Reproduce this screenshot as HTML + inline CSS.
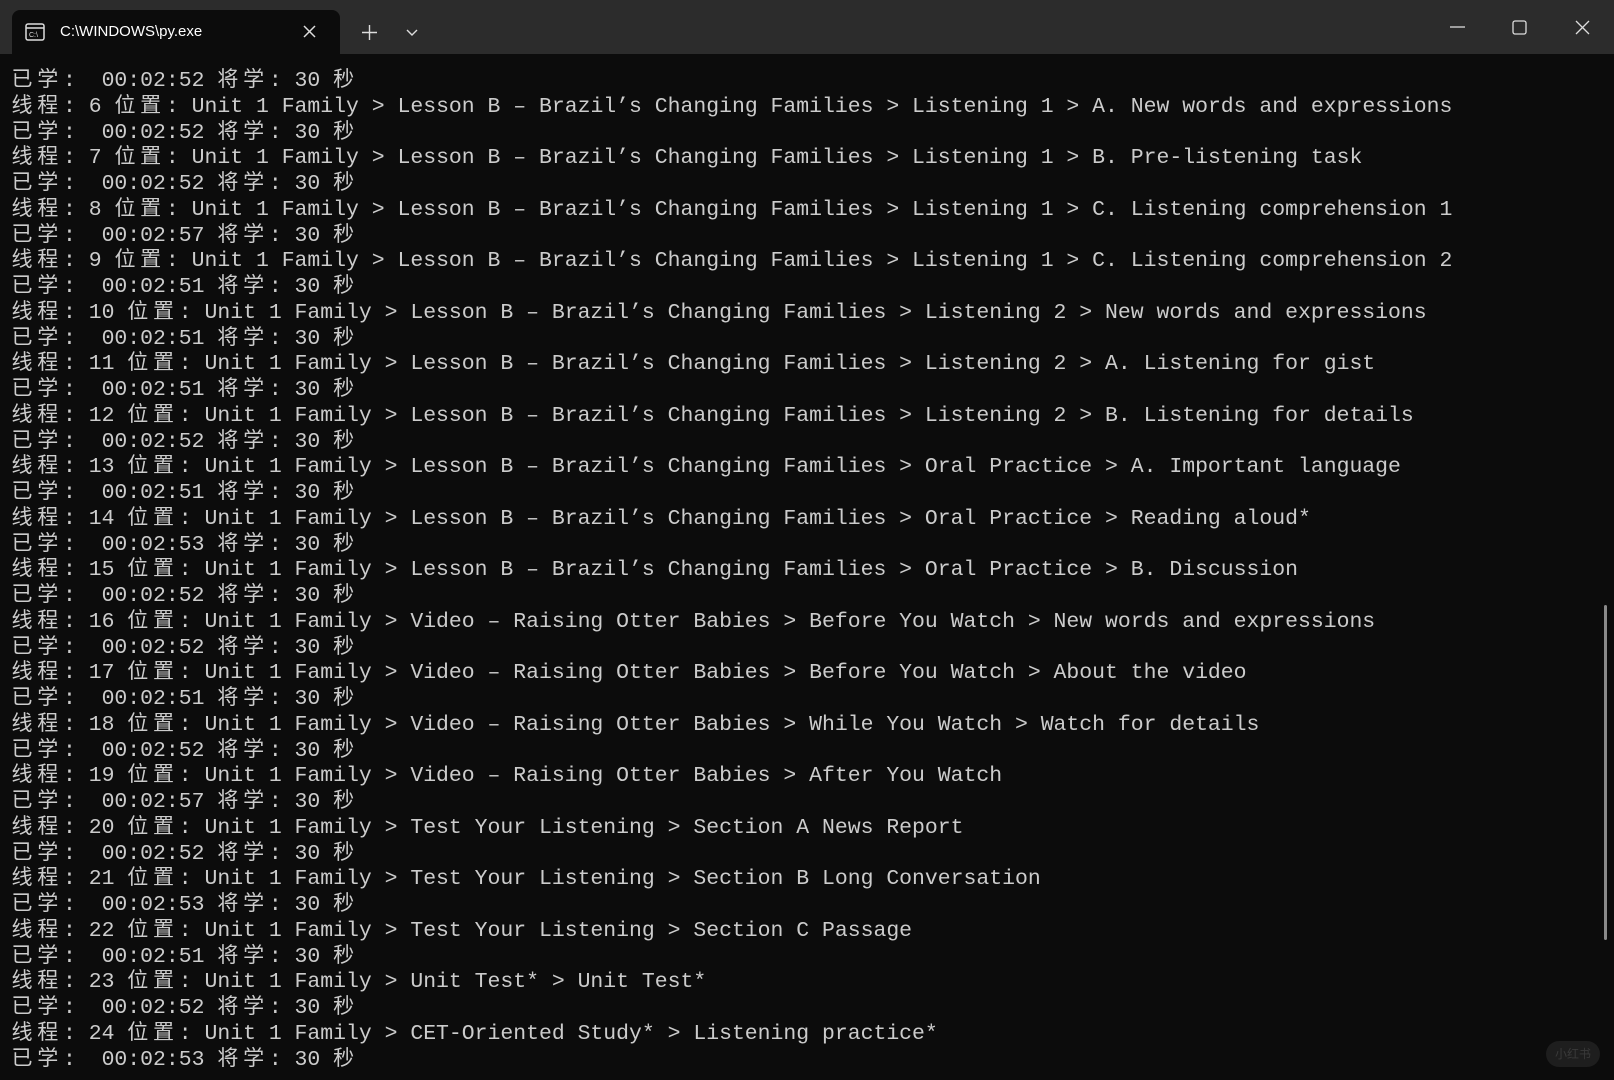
<!DOCTYPE html>
<html><head><meta charset="utf-8"><style>
html,body{margin:0;padding:0;width:1614px;height:1080px;overflow:hidden;background:#0c0c0c;}
.tb{position:absolute;left:0;top:0;width:1614px;height:54px;background:#2c2c2c;}
.tab{position:absolute;left:12px;top:10px;width:328px;height:44px;background:#0c0c0c;border-radius:8px 8px 0 0;}
.tt{position:absolute;left:60px;top:23px;font:15px "Liberation Sans",sans-serif;color:#fff;}
.ic{position:absolute;}
.term{position:absolute;left:11.5px;top:68px;font-family:"Liberation Mono",monospace;font-size:21.45px;color:#cccccc;white-space:normal;}
.term div{height:25.76px;line-height:25.76px;white-space:pre;}
.c{display:inline-block;width:25.74px;font-family:"Noto Sans CJK SC",sans-serif;font-size:21px;line-height:20px;vertical-align:baseline;}
.sb{position:absolute;left:1604px;top:605px;width:3px;height:335px;background:#8a8a8a;border-radius:2px;}
.wm{position:absolute;left:1546px;top:1041px;width:54px;height:26px;border-radius:13px;background:#1e1e1e;color:#3a3a3a;font:12px "Noto Sans CJK SC",sans-serif;text-align:center;line-height:26px;}
</style></head><body>
<div class="tb"></div>
<div class="tab"></div>
<svg class="ic" style="left:25px;top:23px" width="20" height="18" viewBox="0 0 20 18"><rect x="1" y="1" width="18" height="16" rx="2" fill="none" stroke="#ddd" stroke-width="1.5"/><line x1="1" y1="5" x2="19" y2="5" stroke="#ddd" stroke-width="1.5"/><text x="4" y="14" font-size="7" fill="#ddd" font-family="Liberation Sans">C:\</text></svg>
<div class="tt">C:\WINDOWS\py.exe</div>
<svg class="ic" style="left:303px;top:25px" width="13" height="13"><path d="M1 1L12 12M12 1L1 12" stroke="#ddd" stroke-width="1.5"/></svg>
<svg class="ic" style="left:362px;top:25px" width="15" height="15"><path d="M7.5 0V15M0 7.5H15" stroke="#ddd" stroke-width="1.4"/></svg>
<svg class="ic" style="left:406px;top:29px" width="12" height="8"><path d="M1 1L6 6L11 1" stroke="#ddd" stroke-width="1.4" fill="none"/></svg>
<svg class="ic" style="left:1450px;top:26px" width="15" height="2"><path d="M0 1H15" stroke="#ddd" stroke-width="1.3"/></svg>
<svg class="ic" style="left:1512px;top:20px" width="15" height="15"><rect x="1" y="1" width="13" height="13" rx="2" fill="none" stroke="#ddd" stroke-width="1.3"/></svg>
<svg class="ic" style="left:1575px;top:20px" width="15" height="15"><path d="M1 1L14 14M14 1L1 14" stroke="#ddd" stroke-width="1.3"/></svg>
<div class="term"><div><span class="c">已</span><span class="c">学</span>:  00:02:52 <span class="c">将</span><span class="c">学</span>: 30 <span class="c">秒</span></div>
<div><span class="c">线</span><span class="c">程</span>: 6 <span class="c">位</span><span class="c">置</span>: Unit 1 Family &gt; Lesson B – Brazil’s Changing Families &gt; Listening 1 &gt; A. New words and expressions</div>
<div><span class="c">已</span><span class="c">学</span>:  00:02:52 <span class="c">将</span><span class="c">学</span>: 30 <span class="c">秒</span></div>
<div><span class="c">线</span><span class="c">程</span>: 7 <span class="c">位</span><span class="c">置</span>: Unit 1 Family &gt; Lesson B – Brazil’s Changing Families &gt; Listening 1 &gt; B. Pre-listening task</div>
<div><span class="c">已</span><span class="c">学</span>:  00:02:52 <span class="c">将</span><span class="c">学</span>: 30 <span class="c">秒</span></div>
<div><span class="c">线</span><span class="c">程</span>: 8 <span class="c">位</span><span class="c">置</span>: Unit 1 Family &gt; Lesson B – Brazil’s Changing Families &gt; Listening 1 &gt; C. Listening comprehension 1</div>
<div><span class="c">已</span><span class="c">学</span>:  00:02:57 <span class="c">将</span><span class="c">学</span>: 30 <span class="c">秒</span></div>
<div><span class="c">线</span><span class="c">程</span>: 9 <span class="c">位</span><span class="c">置</span>: Unit 1 Family &gt; Lesson B – Brazil’s Changing Families &gt; Listening 1 &gt; C. Listening comprehension 2</div>
<div><span class="c">已</span><span class="c">学</span>:  00:02:51 <span class="c">将</span><span class="c">学</span>: 30 <span class="c">秒</span></div>
<div><span class="c">线</span><span class="c">程</span>: 10 <span class="c">位</span><span class="c">置</span>: Unit 1 Family &gt; Lesson B – Brazil’s Changing Families &gt; Listening 2 &gt; New words and expressions</div>
<div><span class="c">已</span><span class="c">学</span>:  00:02:51 <span class="c">将</span><span class="c">学</span>: 30 <span class="c">秒</span></div>
<div><span class="c">线</span><span class="c">程</span>: 11 <span class="c">位</span><span class="c">置</span>: Unit 1 Family &gt; Lesson B – Brazil’s Changing Families &gt; Listening 2 &gt; A. Listening for gist</div>
<div><span class="c">已</span><span class="c">学</span>:  00:02:51 <span class="c">将</span><span class="c">学</span>: 30 <span class="c">秒</span></div>
<div><span class="c">线</span><span class="c">程</span>: 12 <span class="c">位</span><span class="c">置</span>: Unit 1 Family &gt; Lesson B – Brazil’s Changing Families &gt; Listening 2 &gt; B. Listening for details</div>
<div><span class="c">已</span><span class="c">学</span>:  00:02:52 <span class="c">将</span><span class="c">学</span>: 30 <span class="c">秒</span></div>
<div><span class="c">线</span><span class="c">程</span>: 13 <span class="c">位</span><span class="c">置</span>: Unit 1 Family &gt; Lesson B – Brazil’s Changing Families &gt; Oral Practice &gt; A. Important language</div>
<div><span class="c">已</span><span class="c">学</span>:  00:02:51 <span class="c">将</span><span class="c">学</span>: 30 <span class="c">秒</span></div>
<div><span class="c">线</span><span class="c">程</span>: 14 <span class="c">位</span><span class="c">置</span>: Unit 1 Family &gt; Lesson B – Brazil’s Changing Families &gt; Oral Practice &gt; Reading aloud*</div>
<div><span class="c">已</span><span class="c">学</span>:  00:02:53 <span class="c">将</span><span class="c">学</span>: 30 <span class="c">秒</span></div>
<div><span class="c">线</span><span class="c">程</span>: 15 <span class="c">位</span><span class="c">置</span>: Unit 1 Family &gt; Lesson B – Brazil’s Changing Families &gt; Oral Practice &gt; B. Discussion</div>
<div><span class="c">已</span><span class="c">学</span>:  00:02:52 <span class="c">将</span><span class="c">学</span>: 30 <span class="c">秒</span></div>
<div><span class="c">线</span><span class="c">程</span>: 16 <span class="c">位</span><span class="c">置</span>: Unit 1 Family &gt; Video – Raising Otter Babies &gt; Before You Watch &gt; New words and expressions</div>
<div><span class="c">已</span><span class="c">学</span>:  00:02:52 <span class="c">将</span><span class="c">学</span>: 30 <span class="c">秒</span></div>
<div><span class="c">线</span><span class="c">程</span>: 17 <span class="c">位</span><span class="c">置</span>: Unit 1 Family &gt; Video – Raising Otter Babies &gt; Before You Watch &gt; About the video</div>
<div><span class="c">已</span><span class="c">学</span>:  00:02:51 <span class="c">将</span><span class="c">学</span>: 30 <span class="c">秒</span></div>
<div><span class="c">线</span><span class="c">程</span>: 18 <span class="c">位</span><span class="c">置</span>: Unit 1 Family &gt; Video – Raising Otter Babies &gt; While You Watch &gt; Watch for details</div>
<div><span class="c">已</span><span class="c">学</span>:  00:02:52 <span class="c">将</span><span class="c">学</span>: 30 <span class="c">秒</span></div>
<div><span class="c">线</span><span class="c">程</span>: 19 <span class="c">位</span><span class="c">置</span>: Unit 1 Family &gt; Video – Raising Otter Babies &gt; After You Watch</div>
<div><span class="c">已</span><span class="c">学</span>:  00:02:57 <span class="c">将</span><span class="c">学</span>: 30 <span class="c">秒</span></div>
<div><span class="c">线</span><span class="c">程</span>: 20 <span class="c">位</span><span class="c">置</span>: Unit 1 Family &gt; Test Your Listening &gt; Section A News Report</div>
<div><span class="c">已</span><span class="c">学</span>:  00:02:52 <span class="c">将</span><span class="c">学</span>: 30 <span class="c">秒</span></div>
<div><span class="c">线</span><span class="c">程</span>: 21 <span class="c">位</span><span class="c">置</span>: Unit 1 Family &gt; Test Your Listening &gt; Section B Long Conversation</div>
<div><span class="c">已</span><span class="c">学</span>:  00:02:53 <span class="c">将</span><span class="c">学</span>: 30 <span class="c">秒</span></div>
<div><span class="c">线</span><span class="c">程</span>: 22 <span class="c">位</span><span class="c">置</span>: Unit 1 Family &gt; Test Your Listening &gt; Section C Passage</div>
<div><span class="c">已</span><span class="c">学</span>:  00:02:51 <span class="c">将</span><span class="c">学</span>: 30 <span class="c">秒</span></div>
<div><span class="c">线</span><span class="c">程</span>: 23 <span class="c">位</span><span class="c">置</span>: Unit 1 Family &gt; Unit Test* &gt; Unit Test*</div>
<div><span class="c">已</span><span class="c">学</span>:  00:02:52 <span class="c">将</span><span class="c">学</span>: 30 <span class="c">秒</span></div>
<div><span class="c">线</span><span class="c">程</span>: 24 <span class="c">位</span><span class="c">置</span>: Unit 1 Family &gt; CET-Oriented Study* &gt; Listening practice*</div>
<div><span class="c">已</span><span class="c">学</span>:  00:02:53 <span class="c">将</span><span class="c">学</span>: 30 <span class="c">秒</span></div></div>
<div class="sb"></div>
<div class="wm">小红书</div>
</body></html>
